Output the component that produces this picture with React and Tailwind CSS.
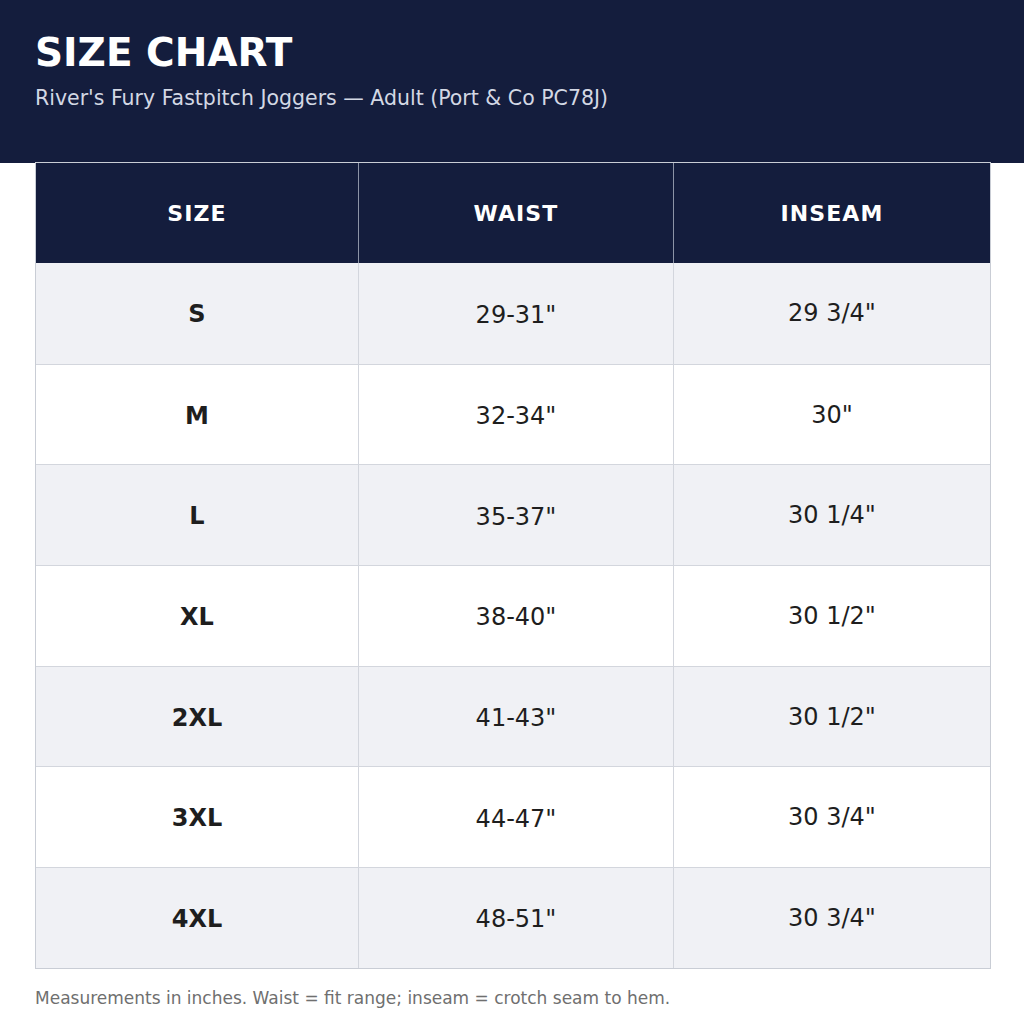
const rows = [
  { size: 'S', waist: '29-31"', inseam: '29 3/4"' },
  { size: 'M', waist: '32-34"', inseam: '30"' },
  { size: 'L', waist: '35-37"', inseam: '30 1/4"' },
  { size: 'XL', waist: '38-40"', inseam: '30 1/2"' },
  { size: '2XL', waist: '41-43"', inseam: '30 1/2"' },
  { size: '3XL', waist: '44-47"', inseam: '30 3/4"' },
  { size: '4XL', waist: '48-51"', inseam: '30 3/4"' },
];

export default function App() {
  return (
    <div className="min-h-[1024px] w-[1024px] bg-white font-['DejaVu_Sans',sans-serif]">
      <header className="h-[163px] bg-[#141d3d] px-[35px] pt-[30px]">
        <h1 className="text-[39px] font-bold leading-[46px] text-white">SIZE CHART</h1>
        <p className="mt-[10px] text-[20.5px] leading-[24px] text-[#d3d8e4]">
          River's Fury Fastpitch Joggers — Adult (Port &amp; Co PC78J)
        </p>
      </header>

      <div className="-mt-px ml-[35px] w-[956px] border border-[#c9cdd5]">
        <div className="grid h-[100px] grid-cols-[323px_315px_1fr] bg-[#141d3d] text-[22px] font-bold tracking-[0.05em] text-white">
          <div className="flex items-center justify-center border-r border-[#8c93a6]">SIZE</div>
          <div className="flex items-center justify-center border-r border-[#8c93a6]">WAIST</div>
          <div className="flex items-center justify-center">INSEAM</div>
        </div>
        {rows.map((row, i) => (
          <div
            key={row.size}
            className={[
              'grid h-[100.7px] grid-cols-[323px_315px_1fr] text-[24px] text-[#1e1e1e]',
              i % 2 === 0 ? 'bg-[#f0f1f5]' : 'bg-white',
              i > 0 ? 'border-t border-[#d3d6dd]' : '',
            ].join(' ')}
          >
            <div className="flex items-center justify-center border-r border-[#d3d6dd] pt-[2px] font-bold">{row.size}</div>
            <div className="flex items-center justify-center border-r border-[#d3d6dd] pt-[3px]">{row.waist}</div>
            <div className="flex items-center justify-center">{row.inseam}</div>
          </div>
        ))}
      </div>

      <p className="ml-[35px] mt-[19px] text-[17px] leading-[20px] text-[#6f6f6f]">
        Measurements in inches. Waist = fit range; inseam = crotch seam to hem.
      </p>
    </div>
  );
}
